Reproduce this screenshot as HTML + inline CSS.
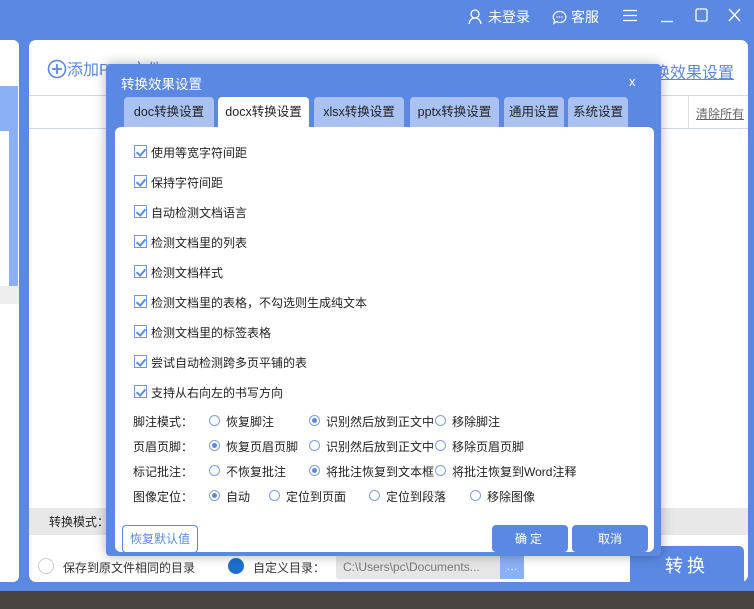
<!DOCTYPE html>
<html><head><meta charset="utf-8"><style>
*{margin:0;padding:0;box-sizing:border-box}
body{width:754px;height:609px;overflow:hidden;background:#5b88e2;font-family:"Liberation Sans","Noto Sans CJK SC",sans-serif;font-size:12px;color:#222;position:relative}
.a{position:absolute;white-space:nowrap}
.cb{position:absolute;width:13px;height:13px;border:1px solid #6f95e6;background:#fff}
.cb:after{content:"";position:absolute;left:3px;top:1px;width:4px;height:7px;border:solid #5b88e2;border-width:0 2px 2px 0;transform:rotate(40deg)}
.rd{position:absolute;width:11px;height:11px;border:1px solid #7a9ee8;border-radius:50%;background:#fff}
.rd.on:after{content:"";position:absolute;left:2px;top:2px;width:5px;height:5px;border-radius:50%;background:#5b88e2}
.tab{position:absolute;top:97px;height:30px;background:#a9c2f2;border-radius:4px 4px 0 0;font-size:12.5px;text-align:center;line-height:30px;color:#222}
.btn{position:absolute;background:#5b88e2;color:#fff;border-radius:4px;text-align:center;line-height:28px}
.t{position:absolute;white-space:nowrap;left:151px}
</style></head><body>
<!-- top bar -->
<div class="a" style="left:468px;top:7px;color:#fff;font-size:14px">
<svg width="14" height="16" style="vertical-align:-3px;margin-right:6px" viewBox="0 0 14 16"><circle cx="7" cy="5" r="4" fill="none" stroke="#fff" stroke-width="1.3"/><path d="M1 15 Q2 9 7 9 Q12 9 13 15" fill="none" stroke="#fff" stroke-width="1.3"/></svg>未登录</div>
<div class="a" style="left:552px;top:7px;color:#fff;font-size:14px">
<svg width="15" height="15" style="vertical-align:-3px;margin-right:4px" viewBox="0 0 15 15"><path d="M7.5 1.5a6 5.5 0 1 1-3 10l-2.5 2 0.5-3.2A6 5.5 0 0 1 7.5 1.5z" fill="none" stroke="#fff" stroke-width="1.2"/><circle cx="5" cy="7" r=".8" fill="#fff"/><circle cx="7.5" cy="7" r=".8" fill="#fff"/><circle cx="10" cy="7" r=".8" fill="#fff"/></svg>客服</div>
<svg class="a" style="left:623px;top:9px" width="14" height="13"><path d="M0 1.5H14M0 6.5H14M0 11.5H14" stroke="#fff" stroke-width="1.2"/></svg>
<svg class="a" style="left:660px;top:9px" width="14" height="14"><path d="M1 12.5H13" stroke="#fff" stroke-width="1.3"/></svg>
<svg class="a" style="left:695px;top:8px" width="13" height="14"><rect x="1" y="1" width="11" height="12" rx="1.5" fill="none" stroke="#fff" stroke-width="1.3"/></svg>
<svg class="a" style="left:728px;top:8px" width="13" height="14"><path d="M1 1L12 13M12 1L1 13" stroke="#fff" stroke-width="1.3"/></svg>
<!-- left panel -->
<div class="a" style="left:0;top:40px;width:19px;height:542px;background:#fff;border-radius:0 6px 6px 0"></div>
<div class="a" style="left:0;top:86px;width:10px;height:45px;background:#8cb0f5"></div>
<div class="a" style="left:9px;top:86px;width:9px;height:200px;background:#8cb0f5"></div>
<div class="a" style="left:0;top:286px;width:19px;height:18px;background:#eee"></div>
<!-- main panel -->
<div class="a" style="left:29px;top:40px;width:719px;height:542px;background:#fff;border-radius:7px"></div>
<div class="a" style="left:29px;top:95px;width:719px;height:1px;background:#cfd8e6"></div>
<div class="a" style="left:29px;top:128px;width:719px;height:1px;background:#cfd8e6"></div>
<div class="a" style="left:688px;top:96px;width:1px;height:32px;background:#ddd"></div>
<div class="a" style="left:696px;top:105px;color:#666;text-decoration:underline">清除所有</div>
<div class="a" style="left:47px;top:56px;font-size:16px;color:#5b88e2"><svg width="20" height="20" style="vertical-align:-4px" viewBox="0 0 20 20"><circle cx="10" cy="10" r="8.5" fill="none" stroke="#5b88e2" stroke-width="1.6"/><path d="M10 5v10M5 10h10" stroke="#5b88e2" stroke-width="1.8"/></svg>添加PDF文件</div>
<div class="a" style="left:654px;top:59px;font-size:16px;color:#5b88e2;text-decoration:underline">换效果设置</div>
<div class="a" style="left:29px;top:508px;width:719px;height:27px;background:#e8e8e8"></div>
<div class="a" style="left:49px;top:513px;color:#222">转换模式：</div>
<div class="a" style="left:38px;top:558px;width:16px;height:16px;border:1px solid #ccc;border-radius:50%"></div>
<div class="a" style="left:63px;top:559px;color:#333">保存到原文件相同的目录</div>
<div class="a" style="left:228px;top:558px;width:16px;height:16px;background:#1e6fd0;border-radius:50%"></div>
<div class="a" style="left:253px;top:559px;color:#333">自定义目录：</div>
<div class="a" style="left:336px;top:555px;width:164px;height:24px;background:#e6e6e6;border-radius:3px 0 0 3px;color:#777;line-height:24px;padding-left:7px">C:\Users\pc\Documents...</div>
<div class="a" style="left:500px;top:555px;width:24px;height:24px;background:#8cb0f5;color:#fff;text-align:center;line-height:22px">…</div>
<div class="btn" style="left:630px;top:546px;width:114px;height:40px;line-height:40px;font-size:18px;letter-spacing:4px;border-radius:5px">转换</div>
<div class="a" style="left:0;top:591px;width:754px;height:18px;background:#4a4440"></div>
<div class="a" style="left:0;top:582px;width:754px;height:9px;background:#5b88e2"></div>
<!-- dialog -->
<div class="a" style="left:106px;top:64px;width:555px;height:492px;background:#5b88e2;border-radius:4px;box-shadow:0 0 12px rgba(0,0,0,.3)"></div>
<div class="a" style="left:121px;top:73px;color:#fff;font-size:13.5px">转换效果设置</div>
<div class="a" style="left:629px;top:74px;color:#fff;font-size:13px">x</div>
<div class="tab" style="left:124px;width:90px">doc转换设置</div>
<div class="tab" style="left:218px;width:91px;background:#fff;height:31px">docx转换设置</div>
<div class="tab" style="left:314px;width:90px">xlsx转换设置</div>
<div class="tab" style="left:410px;width:89px">pptx转换设置</div>
<div class="tab" style="left:504px;width:60px">通用设置</div>
<div class="tab" style="left:568px;width:60px">系统设置</div>
<div class="a" style="left:115px;top:127px;width:539px;height:425px;background:#fff;border-radius:6px"></div>

<div class="cb" style="left:134px;top:145px"></div><div class="t" style="top:144px">使用等宽字符间距</div>
<div class="cb" style="left:134px;top:175px"></div><div class="t" style="top:174px">保持字符间距</div>
<div class="cb" style="left:134px;top:205px"></div><div class="t" style="top:204px">自动检测文档语言</div>
<div class="cb" style="left:134px;top:235px"></div><div class="t" style="top:234px">检测文档里的列表</div>
<div class="cb" style="left:134px;top:265px"></div><div class="t" style="top:264px">检测文档样式</div>
<div class="cb" style="left:134px;top:295px"></div><div class="t" style="top:294px">检测文档里的表格，不勾选则生成纯文本</div>
<div class="cb" style="left:134px;top:325px"></div><div class="t" style="top:324px">检测文档里的标签表格</div>
<div class="cb" style="left:134px;top:355px"></div><div class="t" style="top:354px">尝试自动检测跨多页平铺的表</div>
<div class="cb" style="left:134px;top:385px"></div><div class="t" style="top:384px">支持从右向左的书写方向</div>

<div class="a" style="left:133px;top:413px">脚注模式：</div>
<div class="rd" style="left:209px;top:415px"></div><div class="a" style="left:226px;top:413px">恢复脚注</div>
<div class="rd on" style="left:309px;top:415px"></div><div class="a" style="left:326px;top:413px">识别然后放到正文中</div>
<div class="rd" style="left:435px;top:415px"></div><div class="a" style="left:452px;top:413px">移除脚注</div>

<div class="a" style="left:133px;top:438px">页眉页脚：</div>
<div class="rd on" style="left:209px;top:440px"></div><div class="a" style="left:226px;top:438px">恢复页眉页脚</div>
<div class="rd" style="left:309px;top:440px"></div><div class="a" style="left:326px;top:438px">识别然后放到正文中</div>
<div class="rd" style="left:435px;top:440px"></div><div class="a" style="left:452px;top:438px">移除页眉页脚</div>

<div class="a" style="left:133px;top:463px">标记批注：</div>
<div class="rd" style="left:209px;top:465px"></div><div class="a" style="left:226px;top:463px">不恢复批注</div>
<div class="rd on" style="left:309px;top:465px"></div><div class="a" style="left:326px;top:463px">将批注恢复到文本框</div>
<div class="rd" style="left:435px;top:465px"></div><div class="a" style="left:452px;top:463px">将批注恢复到Word注释</div>

<div class="a" style="left:133px;top:488px">图像定位：</div>
<div class="rd on" style="left:209px;top:490px"></div><div class="a" style="left:226px;top:488px">自动</div>
<div class="rd" style="left:269px;top:490px"></div><div class="a" style="left:286px;top:488px">定位到页面</div>
<div class="rd" style="left:369px;top:490px"></div><div class="a" style="left:386px;top:488px">定位到段落</div>
<div class="rd" style="left:470px;top:490px"></div><div class="a" style="left:487px;top:488px">移除图像</div>

<div class="a" style="left:122px;top:525px;width:76px;height:28px;border:1px solid #5b88e2;border-radius:4px;color:#5b88e2;text-align:center;line-height:26px">恢复默认值</div>
<div class="btn" style="left:492px;top:525px;width:76px;height:27px;letter-spacing:3px">确定</div>
<div class="btn" style="left:572px;top:525px;width:76px;height:27px">取消</div>
</body></html>
